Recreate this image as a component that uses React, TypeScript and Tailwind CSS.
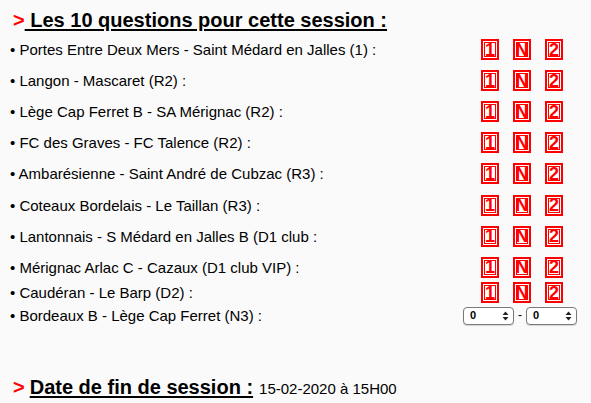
import React from "react";

const matches = [
  "Portes Entre Deux Mers - Saint Médard en Jalles (1) :",
  "Langon - Mascaret (R2) :",
  "Lège Cap Ferret B - SA Mérignac (R2) :",
  "FC des Graves - FC Talence (R2) :",
  "Ambarésienne - Saint André de Cubzac (R3) :",
  "Coteaux Bordelais - Le Taillan (R3) :",
  "Lantonnais - S Médard en Jalles B (D1 club :",
  "Mérignac Arlac C - Cazaux (D1 club VIP) :",
];

function Box({ label }: { label: string }) {
  return (
    <div className="w-[18px] h-[21px] border-2 border-[#ff0000] bg-white p-[1px]">
      <div className="w-full h-full border border-[#ff0000] bg-white flex items-center justify-center text-[18px] font-bold leading-none text-[#ff0000]">
        {label}
      </div>
    </div>
  );
}

function Boxes() {
  return (
    <div className="flex gap-[14px] ml-auto mr-[28px]">
      <Box label="1" />
      <Box label="N" />
      <Box label="2" />
    </div>
  );
}

function Select() {
  return (
    <div className="w-[51px] h-[18px] border border-[#7a7a7a] rounded-[4px] bg-white flex items-center pl-[6px] pr-[4px] text-[11px] font-bold text-black shadow-[0_1px_1px_rgba(0,0,0,0.15)]">
      <span className="flex-1">0</span>
      <svg width="7" height="10" viewBox="0 0 7 10">
        <path d="M0.5 4 L3.5 0.5 L6.5 4 Z" fill="#222" />
        <path d="M0.5 6 L3.5 9.5 L6.5 6 Z" fill="#222" />
      </svg>
    </div>
  );
}

export default function App() {
  return (
    <div
      className="w-[591px] h-[403px] bg-[#fafafa] text-black overflow-hidden"
      style={{ fontFamily: '"Liberation Sans", Arial, sans-serif' }}
    >
      <div className="pt-[8px] pl-[13px] text-[20px] font-bold leading-[24px]">
        <span className="text-[#ff0000]">&gt;</span>
        <span className="underline underline-offset-[2px] decoration-[2px]"> Les 10 questions pour cette session :</span>
      </div>
      <div className="pl-[10px] text-[15px] leading-[17px] mt-[2px]">
        {matches.map((m) => (
          <div key={m} className="flex items-center h-[31.1px]">
            <span>• {m}</span>
            <Boxes />
          </div>
        ))}
        <div className="flex items-center h-[22px] -mt-[1px]">
          <span>• Caudéran - Le Barp (D2) :</span>
          <Boxes />
        </div>
        <div className="flex items-center h-[24px]">
          <span>• Bordeaux B - Lège Cap Ferret (N3) :</span>
          <div className="ml-auto mr-[14px] flex items-center gap-[4px]">
            <Select />
            <span className="text-[12px]">-</span>
            <Select />
          </div>
        </div>
      </div>
      <div className="mt-[44px] pl-[13px] flex items-baseline">
        <span className="text-[20px] font-bold text-[#ff0000]">&gt;</span>
        <span className="text-[20px] font-bold underline underline-offset-[2px] decoration-[2px] ml-[5px]">Date de fin de session :</span>
        <span className="text-[15px] ml-[6px]">15-02-2020 à 15H00</span>
      </div>
    </div>
  );
}
